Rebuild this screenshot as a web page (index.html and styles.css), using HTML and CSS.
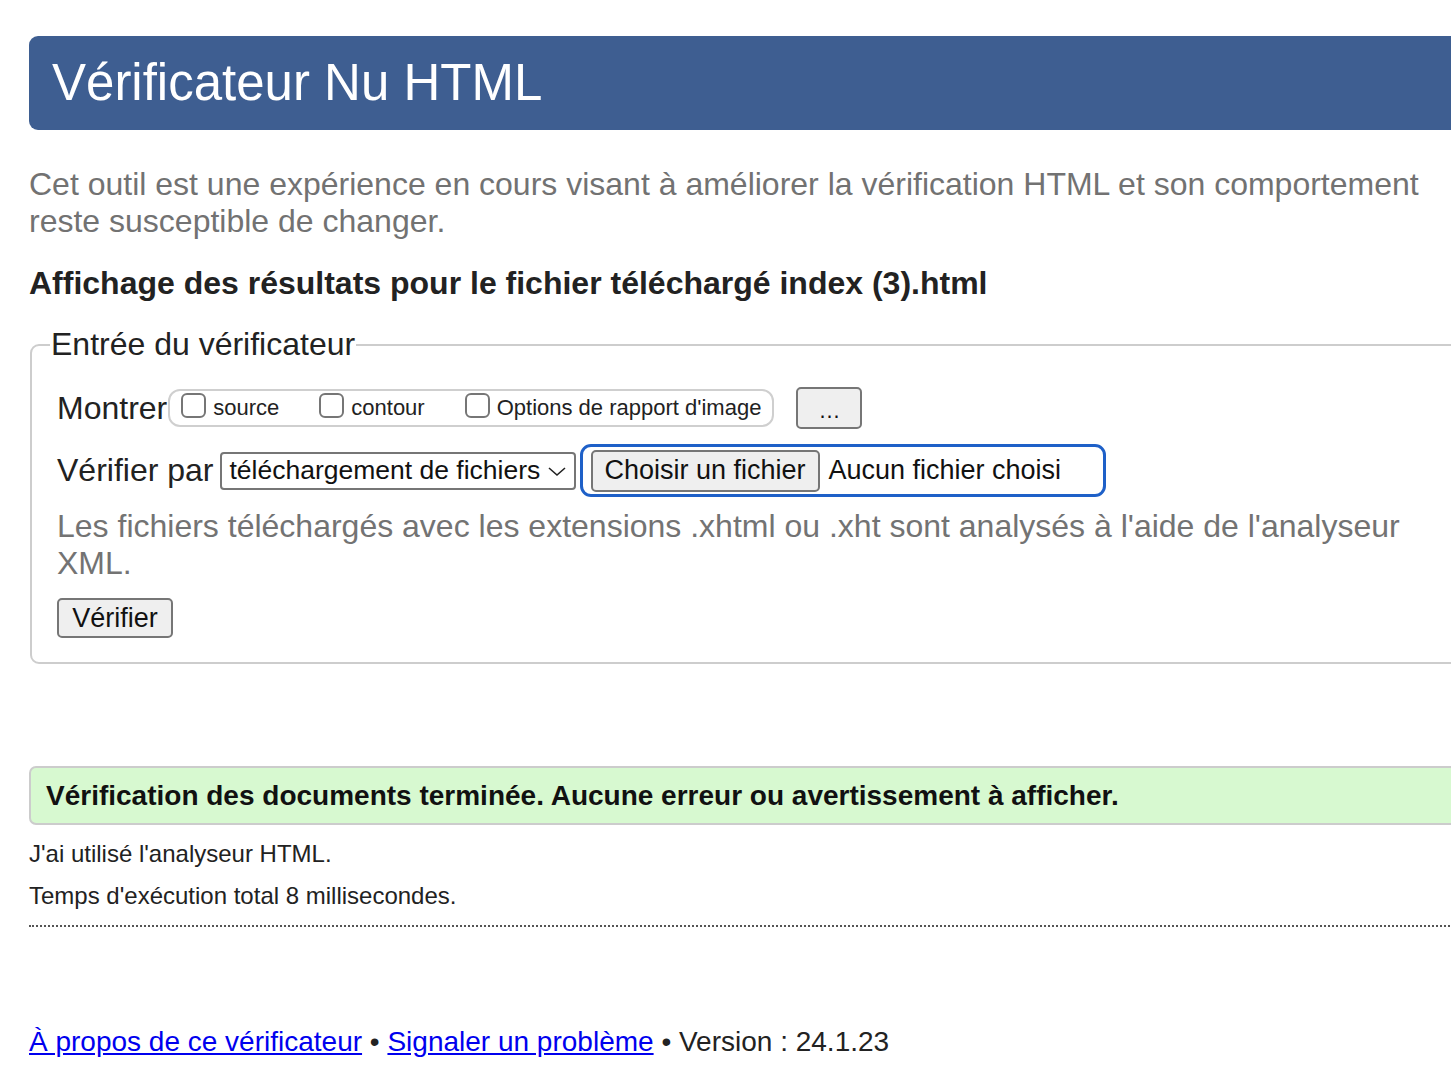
FILE: index.html
```html
<!DOCTYPE html>
<html lang="fr">
<head>
<meta charset="utf-8">
<title>Vérificateur Nu HTML</title>
<link rel="stylesheet" href="styles.css">
</head>
<body>
<div class="page">
  <h1 class="banner">Vérificateur Nu HTML</h1>
  <p class="intro">Cet outil est une expérience en cours visant à améliorer la vérification HTML et son comportement reste susceptible de changer.</p>
  <h2 class="results-title">Affichage des résultats pour le fichier téléchargé index (3).html</h2>
  <fieldset class="checker">
    <legend class="checker-legend">Entrée du vérificateur</legend>
    <div class="row">
      <span class="row-label">Montrer</span>
      <div class="show-group">
        <label class="opt"><input type="checkbox" class="cb"><span>source</span></label>
        <label class="opt"><input type="checkbox" class="cb"><span>contour</span></label>
        <label class="opt"><input type="checkbox" class="cb"><span>Options de rapport d'image</span></label>
      </div>
      <button type="button" class="btn btn-more">…</button>
    </div>
    <div class="row row-by">
      <span class="row-label">Vérifier par</span>
      <div class="select">
        <span>téléchargement de fichiers</span>
        <svg class="chev" width="20" height="12" viewBox="0 0 20 12"><path d="M2 3 L10 10 L18 3" fill="none" stroke="#222" stroke-width="1.6"/></svg>
      </div>
      <div class="file-focus">
        <button type="button" class="btn btn-file">Choisir un fichier</button>
        <span class="file-name">Aucun fichier choisi</span>
      </div>
    </div>
    <p class="help">Les fichiers téléchargés avec les extensions .xhtml ou .xht sont analysés à l'aide de l'analyseur XML.</p>
    <button type="button" class="btn btn-submit">Vérifier</button>
  </fieldset>
  <p class="success">Vérification des documents terminée. Aucune erreur ou avertissement à afficher.</p>
  <p class="meta">J'ai utilisé l'analyseur HTML.</p>
  <p class="meta">Temps d'exécution total 8 millisecondes.</p>
  <hr class="dotted">
  <p class="footer"><a href="#">À propos de ce vérificateur</a> • <a href="#">Signaler un problème</a> • Version : 24.1.23</p>
</div>
</body>
</html>
```
FILE: styles.css
```css
html, body {
  margin: 0;
  padding: 0;
  overflow: hidden;
  background: #fff;
}
body {
  font-family: "Liberation Sans", Arial, Helvetica, sans-serif;
  color: #222;
}
.page {
  width: 1500px;
  padding: 36px 0 0 29px;
}
.banner {
  margin: 0;
  height: 94px;
  box-sizing: border-box;
  background: #3e5e91;
  color: #fff;
  border-radius: 9px;
  font-size: 51px;
  font-weight: normal;
  line-height: 94px;
  padding-left: 23px;
}
.intro {
  margin: 36px 0 0;
  font-size: 32px;
  line-height: 37px;
  color: #727272;
  width: 1400px;
}
.results-title {
  margin: 25px 0 0;
  font-size: 32px;
  line-height: 37px;
  font-weight: bold;
  color: #222;
}
.checker {
  margin: 24px 0 0 1px;
  border: 2px solid #cdcdcd;
  border-radius: 9px;
  padding: 24px 0 24px 25px;
  min-width: 0;
}
.checker-legend {
  font-size: 32px;
  line-height: 37px;
  padding: 0 1px;
  margin-left: -7px;
  color: #222;
}
.row {
  display: flex;
  align-items: center;
}
.row-label {
  font-size: 32px;
  color: #222;
}
.show-group {
  display: flex;
  align-items: center;
  border: 2px solid #cfcfcf;
  border-radius: 12px;
  height: 38px;
  box-sizing: border-box;
  padding: 0 11px 0 11px;
  margin-left: 1px;
  gap: 40px;
}
.opt {
  display: flex;
  align-items: center;
  font-size: 22px;
  color: #222;
}
.cb {
  appearance: none;
  -webkit-appearance: none;
  width: 25px;
  height: 25px;
  margin: 0 7px 6px 0;
  border: 2px solid #767676;
  border-radius: 6px;
  background: #fff;
}
.btn {
  font-family: "Liberation Sans", Arial, Helvetica, sans-serif;
  background: #efefef;
  border: 2px solid #767676;
  border-radius: 5px;
  color: #111;
  padding: 0;
}
.btn-more {
  width: 66px;
  height: 42px;
  margin-left: 22px;
  font-size: 22px;
  line-height: 1;
  padding-top: 6px;
}
.row-by {
  margin-top: 15px;
}
.select {
  display: flex;
  align-items: center;
  justify-content: space-between;
  margin-left: 6px;
  width: 356px;
  height: 38px;
  box-sizing: border-box;
  border: 2px solid #767676;
  border-radius: 4px;
  padding: 0 7px 0 8px;
  font-size: 26.5px;
  color: #111;
}
.chev {
  display: block;
}
.file-focus {
  display: flex;
  align-items: center;
  margin-left: 4px;
  width: 526px;
  height: 53px;
  box-sizing: border-box;
  border: 3px solid #1e60c8;
  border-radius: 11px;
  padding: 0 0 0 8px;
}
.btn-file {
  width: 229px;
  height: 42px;
  font-size: 27px;
}
.file-name {
  margin-left: 9px;
  font-size: 27px;
  color: #111;
}
.help {
  margin: 11px 0 0;
  font-size: 32px;
  line-height: 37px;
  color: #737373;
  width: 1370px;
}
.btn-submit {
  display: block;
  margin-top: 16px;
  width: 116px;
  height: 40px;
  font-size: 27px;
}
.success {
  margin: 102px 0 0;
  width: 1460px;
  height: 59px;
  box-sizing: border-box;
  background: #d7f9d0;
  border: 2px solid #cccccc;
  border-radius: 7px;
  padding-left: 15px;
  font-size: 28px;
  font-weight: bold;
  line-height: 55px;
  color: #111;
}
.meta {
  margin: 16px 0 0;
  font-size: 24px;
  line-height: 26px;
  color: #222;
}
.meta + .meta {
  margin-top: 16px;
}
.dotted {
  margin: 16px 0 0;
  border: 0;
  border-top: 2px dotted #555;
  height: 0;
  width: 1460px;
}
.footer {
  margin: 98px 0 0;
  font-size: 28px;
  line-height: 34px;
  color: #222;
}
.footer a {
  color: #0000ee;
}
```
